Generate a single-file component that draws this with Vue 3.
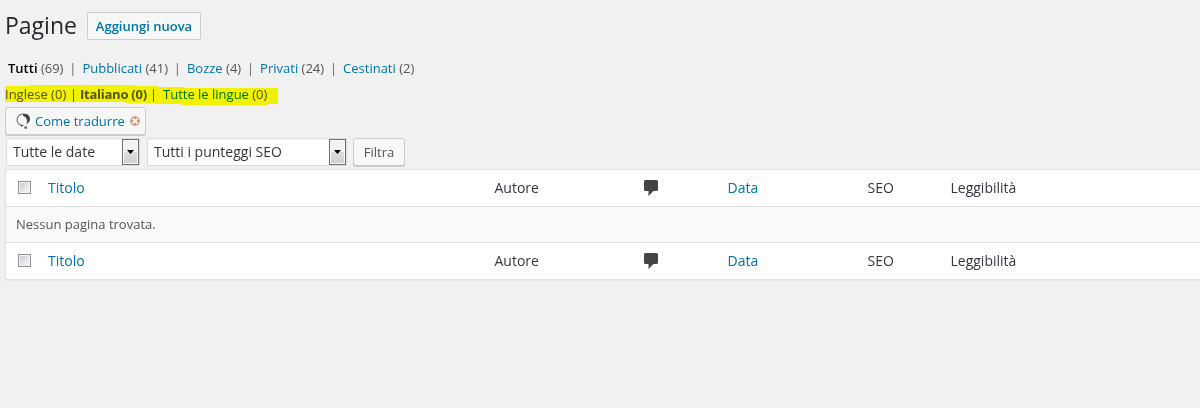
<template>
  <main class="wrap">
    <header class="head">
      <h1 class="head-title">Pagine</h1>
      <a class="head-action">Aggiungi nuova</a>
    </header>

    <ul class="views">
      <li v-for="(view, i) in views" :key="view.label" class="view">
        <span v-if="i" class="view-sep">|</span>
        <a :class="{ current: view.current }">{{ view.label }}</a>&nbsp;<span class="count">({{ view.count }})</span>
      </li>
    </ul>

    <div class="langs">
      <span class="lang lang--en">Inglese (0)</span>
      <span class="lang-sep">|</span>
      <strong class="lang lang--it">Italiano (0)</strong>
      <span class="lang-sep">|</span>
      <span class="lang lang--all"><a>Tutte le lingue</a> (0)</span>
      <svg class="marker" width="280" height="24" viewBox="0 0 280 24" aria-hidden="true">
        <path d="M5 5H30V4H135V5H158V6H184V7H278V23H268V24H181V23H155V22H125V21H5Z" fill="#ffff00" />
      </svg>
    </div>

    <div class="translate">
      <a class="translate-btn">
        <svg class="translate-logo" width="16" height="18" viewBox="0 0 16 18" aria-hidden="true">
          <path d="M5.6 13.6A5.7 5.7 0 0 1 8.2 2.3" fill="none" stroke="#777" stroke-width="1.2" />
          <path d="M7.2 2C12 1 14.6 4.5 13.9 8.1C13.5 9.8 12.3 11.3 10.6 12.3C11.3 10 11.2 8 10.2 6.3C9.5 5 8.5 4.2 7 3.9Z" fill="#444" />
          <path d="M4 12.4L8 13.3L5.6 14.8Z" fill="#484848" />
          <circle cx="9.7" cy="15.6" r="1.5" fill="#777" />
        </svg>
        <span class="translate-text">Come tradurre</span>
        <svg class="translate-close" width="10" height="10" viewBox="0 0 10 10" aria-hidden="true">
          <circle cx="5" cy="5" r="4.1" fill="#f8eeea" stroke="#dc9a80" stroke-width="1.4" />
          <path d="M5 .5V3M5 7V9.5M.5 5H3M7 5H9.5" stroke="#d98f74" stroke-width="1.8" />
        </svg>
      </a>
    </div>

    <div class="filters">
      <div v-for="select in selects" :key="select.text" class="select" :class="select.cls">
        <span class="select-text">{{ select.text }}</span>
        <span class="select-arrow">
          <svg width="7" height="4" viewBox="0 0 7 4" aria-hidden="true"><path d="M0 0H7L3.5 4Z" fill="#000" /></svg>
        </span>
      </div>
      <button class="filter-btn" type="button">Filtra</button>
    </div>

    <div class="table">
      <template v-for="part in ['top', 'bottom']" :key="part">
        <div class="row">
          <span class="cell cell--check"><span class="checkbox" /></span>
          <a class="cell">Titolo</a>
          <span class="cell">Autore</span>
          <span class="cell cell--comment">
            <svg width="14" height="17" viewBox="0 0 14 17" aria-label="Commenti">
              <path d="M1.5 0H12.5Q14 0 14 1.5V9.5Q14 11 12.5 11H9.5L4.5 16V11H1.5Q0 11 0 9.5V1.5Q0 0 1.5 0Z" fill="#444" />
            </svg>
          </span>
          <a class="cell">Data</a>
          <span class="cell">SEO</span>
          <span class="cell">Leggibilità</span>
        </div>
        <p v-if="part === 'top'" class="empty">Nessun pagina trovata.</p>
      </template>
    </div>
  </main>
</template>

<script setup>
const views = [
  { label: 'Tutti', count: 69, current: true },
  { label: 'Pubblicati', count: 41 },
  { label: 'Bozze', count: 4 },
  { label: 'Privati', count: 24 },
  { label: 'Cestinati', count: 2 }
]

const selects = [
  { text: 'Tutte le date', cls: 'select--date' },
  { text: 'Tutti i punteggi SEO', cls: 'select--seo' }
]
</script>

<style>
body {
  background: #f1f1f1;
}
</style>

<style scoped>
.wrap {
  box-sizing: border-box;
  height: 408px;
  padding: 12px 0 0 5px;
  overflow: hidden;
  background: #f1f1f1;
  color: #555;
  font-family: 'Open Sans', sans-serif;
  font-size: 13px;
}

a {
  color: #0073aa;
  text-decoration: none;
}

.head {
  display: flex;
  align-items: center;
  height: 28px;
}

.head-title {
  width: 82px;
  margin: 0;
  font-size: 23px;
  font-weight: 400;
  line-height: 26px;
  padding-bottom: 2px;
  color: #23282d;
}

.head-action {
  box-sizing: border-box;
  width: 114px;
  height: 28px;
  border: 1px solid #ccc;
  border-radius: 2px;
  background: #f7f7f7;
  font-weight: 600;
  line-height: 26px;
  text-align: center;
}

.views {
  display: flex;
  height: 20px;
  margin: 18px 0 0;
  padding: 0 0 0 3px;
  list-style: none;
  line-height: 20px;
}

.view {
  white-space: nowrap;
}

.view-sep {
  margin: 0 6px 0 5.8px;
  color: #666;
}

.current {
  color: #000;
  font-weight: 600;
}

.count {
  color: #555;
}

.langs {
  position: relative;
  display: flex;
  height: 20px;
  margin-top: 6px;
  line-height: 20px;
  white-space: nowrap;
}

.lang--en {
  width: 65px;
}

.lang-sep {
  width: 10px;
}

.lang--it {
  width: 66px;
  margin-right: 4px;
  font-weight: 700;
  letter-spacing: -0.25px;
}

.lang--all {
  margin-left: 3px;
}

.marker {
  position: absolute;
  left: -5px;
  top: -3px;
  mix-blend-mode: multiply;
}

.translate {
  margin-top: 3px;
}

.translate-btn {
  box-sizing: border-box;
  display: flex;
  align-items: center;
  width: 141px;
  height: 28px;
  padding-left: 10px;
  border: 1px solid #ccc;
  border-radius: 3px;
  background: #f7f7f7;
  box-shadow: 0 1px 0 #ccc;
}

.translate-text {
  width: 91px;
  margin-left: 3px;
  margin-right: 4px;
  white-space: nowrap;
}

.filters {
  box-sizing: border-box;
  display: flex;
  height: 31px;
  padding: 3px 0 0 1px;
}

.select {
  box-sizing: border-box;
  display: flex;
  justify-content: space-between;
  height: 28px;
  margin-right: 7px;
  border: 1px solid #ddd;
  background: #fff;
  box-shadow: inset 0 1px 2px rgba(0, 0, 0, 0.05);
  color: #32373c;
  font-size: 14px;
  line-height: 26px;
  white-space: nowrap;
}

.select--date {
  width: 134px;
}

.select--seo {
  width: 200px;
}

.select-text {
  padding-left: 6px;
}

.select-arrow {
  box-sizing: border-box;
  display: flex;
  align-items: center;
  justify-content: center;
  width: 17px;
  height: 26px;
  border: 1px solid #707070;
  background: linear-gradient(#f2f2f2 0 50%, #dddddd 50%, #cfcfcf);
  box-shadow: inset 0 0 0 1px #fafafa;
}

.filter-btn {
  box-sizing: border-box;
  width: 52px;
  height: 28px;
  margin: 0 0 0 -1px;
  padding: 0;
  border: 1px solid #ccc;
  border-radius: 3px;
  background: #f7f7f7;
  box-shadow: 0 1px 0 #ccc;
  color: #555;
  font: 13px/26px 'Open Sans', sans-serif;
}

.table {
  width: 1220px;
  margin-top: 3px;
  border: 1px solid #e1e1e1;
  box-sizing: border-box;
  background: #fff;
  box-shadow: 0 1px 1px rgba(0, 0, 0, 0.04);
}

.row {
  box-sizing: border-box;
  display: grid;
  grid-template-columns: 42px 446.5px 149.5px 83.5px 140px 83px 1fr;
  align-items: center;
  height: 36px;
  padding-bottom: 2px;
  color: #32373c;
  font-size: 14px;
}

.cell--check {
  padding-left: 12px;
}

.checkbox {
  display: block;
  box-sizing: border-box;
  width: 13px;
  height: 13px;
  border: 1px solid #8e8f8f;
  background: linear-gradient(135deg, #c9cdd2, #f6f6f6) content-box;
  padding: 1px;
  box-shadow: inset 0 0 0 1px #f4f4f4;
}

.cell--comment {
  padding-top: 2px;
}

.cell--comment svg {
  display: block;
}

.empty {
  height: 35px;
  margin: 0;
  padding-left: 10px;
  border: solid #e1e1e1;
  border-width: 1px 0;
  background: #f9f9f9;
  line-height: 34px;
}
</style>
